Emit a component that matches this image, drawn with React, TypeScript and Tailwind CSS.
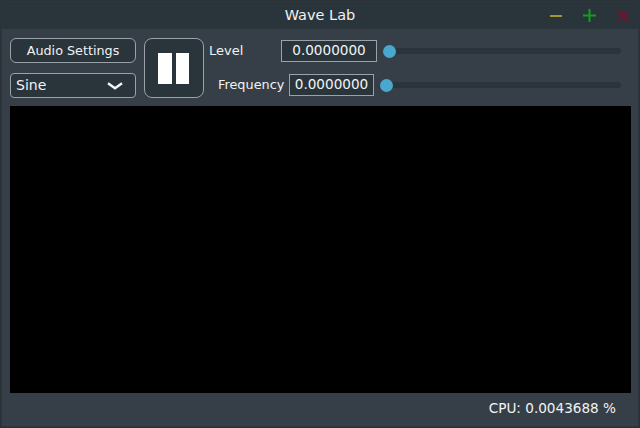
function Slider() {
  return (
    <div className="relative flex-1 h-[6px] rounded-full bg-[#2a343b]">
      <div className="absolute left-[-6px] top-[-3px] w-[13px] h-[13px] rounded-full bg-[#4aa8cf]" />
    </div>
  )
}

export default function App() {
  return (
    <div className="w-[640px] h-[428px] border border-[#2a3238] font-['DejaVu_Sans',sans-serif] text-[#f0f2f3] overflow-hidden">
      <div className="h-full flex flex-col bg-[#363f47] border border-[#2d363d] text-[13px]">
        <div className="relative h-[27px] shrink-0 flex items-center justify-center bg-[#2a343b] text-[14.5px] pt-[1px]">
          <span>Wave Lab</span>
          <div className="absolute right-[9px] top-0 h-full flex items-center gap-[21px]">
            <svg width="12" height="12" viewBox="0 0 12 12">
              <path d="M0 6h12" stroke="#a8942c" strokeWidth="2" />
            </svg>
            <svg width="13" height="13" viewBox="0 0 13 13">
              <path d="M0 6.5h13M6.5 0v13" stroke="#149c1c" strokeWidth="2" />
            </svg>
            <svg width="12" height="12" viewBox="0 0 12 12">
              <path d="M1 1l10 10M11 1L1 11" stroke="#7a1230" strokeWidth="2.4" />
            </svg>
          </div>
        </div>

        <div className="flex-1 flex flex-col pt-[9px] pl-[8px] pr-[7px]">
          <div className="flex h-[60px] shrink-0">
            <div className="w-[126px] flex flex-col justify-between">
              <button className="h-[25px] rounded-[6px] border border-[#98a2a8] bg-[#2a343b] text-[12.75px]">Audio Settings</button>
              <div className="h-[25px] rounded-[4px] border border-[#98a2a8] bg-[#2a343b] flex items-center justify-between pl-[5px] pr-[12px]">
                <span className="text-[14px]">Sine</span>
                <svg width="16" height="8" viewBox="0 0 16 8" fill="none">
                  <path d="M1 1.2l7 5 7-5" stroke="#f4f5f6" strokeWidth="2.4" />
                </svg>
              </div>
            </div>
            <button className="ml-[8px] w-[60px] rounded-[8px] border border-[#98a2a8] bg-[#2a343b] flex items-center justify-center gap-[4px] pr-[1px]">
              <span className="w-[14px] h-[31px] bg-white" />
              <span className="w-[13px] h-[31px] bg-white" />
            </button>
            <div className="flex-1 flex flex-col pr-[10px]">
              <div className="flex items-center h-[25px]">
                <span className="w-[77px] pl-[5px]">Level</span>
                <div className="w-[96px] h-[22px] border border-[#98a2a8] bg-[#2a343b] flex items-center justify-center text-[13.6px]">0.0000000</div>
                <div className="flex-1 flex ml-[12px]"><Slider /></div>
              </div>
              <div className="flex items-center h-[25px] mt-[9px]">
                <span className="w-[85px] pl-[14px] whitespace-nowrap text-[12.85px]">Frequency</span>
                <div className="w-[85px] h-[22px] border border-[#98a2a8] bg-[#2a343b] flex items-center justify-center text-[13.6px]">0.0000000</div>
                <div className="flex-1 flex ml-[12px]"><Slider /></div>
              </div>
            </div>
          </div>

          <div className="mt-[8px] h-[287px] bg-black" />

          <div className="flex-1 flex items-center justify-end pr-[15px] pb-[2px] text-[13.6px]">CPU: 0.0043688 %</div>
        </div>
      </div>
    </div>
  )
}
